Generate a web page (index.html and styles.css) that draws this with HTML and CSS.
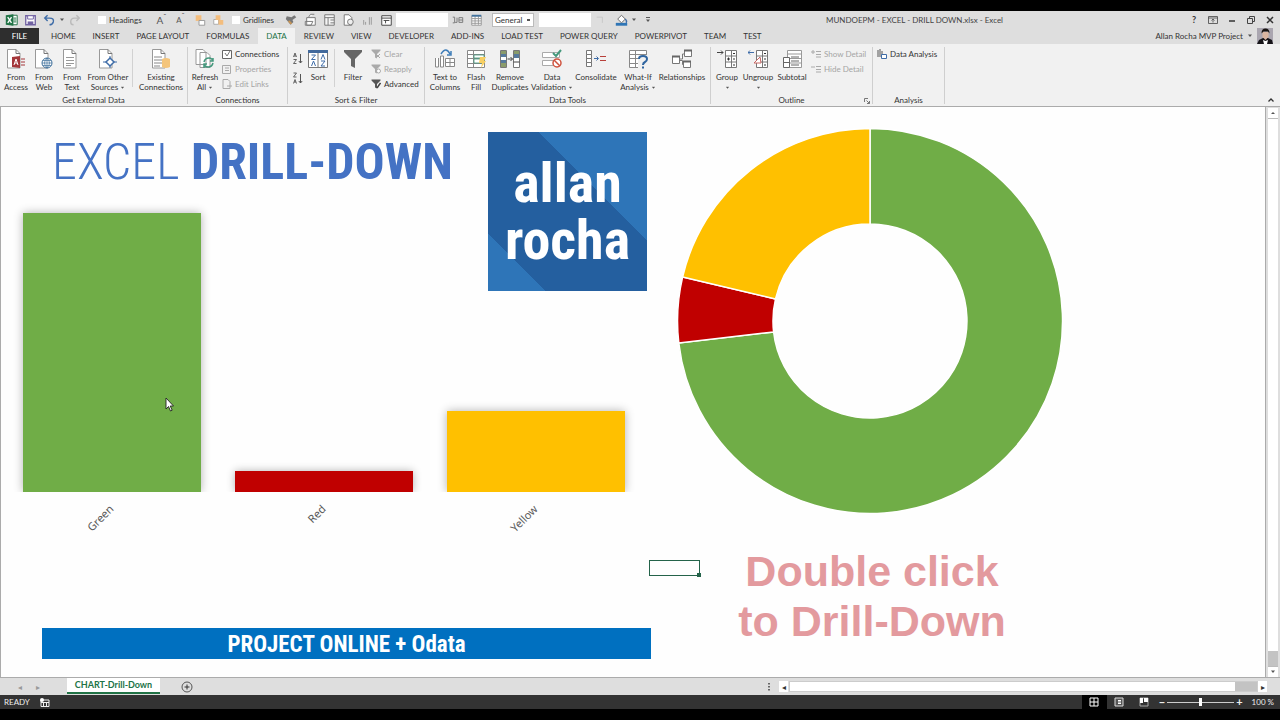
FILE: index.html
```html
<!DOCTYPE html>
<html lang="en">
<head>
<meta charset="utf-8">
<title>MUNDOEPM - EXCEL - DRILL DOWN.xlsx - Excel</title>
<link rel="stylesheet" href="styles.css">
</head>
<body>
<svg class="defs" aria-hidden="true">
  <symbol id="page" viewBox="0 0 20 20"><path d="M1.500 .5h8.500l4 4v14.500h-12.500z" fill="#fff" stroke="#999"/><path d="M10 .5v4h4" fill="none" stroke="#777"/></symbol>
  <symbol id="rows" viewBox="0 0 20 20"><path d="M1.500 1.500h17v17h-17zM1.500 5.500h17M1.500 9.500h17M1.500 14.500h17M7.500 1.500v17" fill="#fff" stroke="#888"/></symbol>
  <symbol id="funnel" viewBox="0 0 20 20"><path d="M1 1h18v2l-7 7v9l-4-2v-7l-7-7z"/></symbol>
  <symbol id="outline" viewBox="0 0 20 20"><path d="M8.500 1.500h11v17h-11zM14.500 1.500v17M8.500 7h11M8.500 13h11" fill="#fff" stroke="#777"/><path d="M16 4.500h2M16 10h2M16 16h2M10 10h3M11.500 8.500v3" stroke="#333"/></symbol>
  <symbol id="caret" viewBox="0 0 6 4"><path d="M1 .5h4l-2 2.500z" fill="#555"/></symbol>
</svg>

<header class="titlebar">
  <div class="qat">
    <svg class="slot" viewBox="0 0 20 16"><path d="M10 3h6v10h-6z" fill="#fff" stroke="#217346"/><path d="M12 6h3M12 8h3M12 10h3" stroke="#217346"/><path d="M4 3l8-1v12l-8-1z" fill="#217346"/><path d="M6 5l4 6M10 5l-4 6" stroke="#fff" stroke-width="1.400"/></svg>
    <svg class="slot" viewBox="0 0 20 16"><path d="M5 3.500h10v9.500h-10z" fill="#fff" stroke="#7162a2" stroke-width="1.400"/><path d="M7 3.500h6v3.500h-6z" fill="#fff" stroke="#7162a2"/><path d="M7 9.500h6v3.500h-6z" fill="#7162a2"/></svg>
    <svg class="slot" viewBox="0 0 20 16"><path d="M8 3l-3 3 3 3M5 6h5q5 0 4 4q-1 3-4 3" fill="none" stroke="#3f6da8" stroke-width="1.500"/></svg>
    <svg class="caret" viewBox="0 0 6 4"><use href="#caret"/></svg>
    <svg class="slot" viewBox="0 0 20 16"><path d="M12 3l3 3-3 3M15 6h-5q-4 0-4 4q0 3 3 3" fill="none" stroke="#bbb" stroke-width="1.500"/></svg>
    <label class="check first"><input type="checkbox">Headings</label>
    <span class="slot letter grow">A<sup>ˆ</sup></span>
    <span class="slot letter">A<sup>ˇ</sup></span>
    <svg class="slot" viewBox="0 0 20 16"><path d="M6 3h6v6h-6z" fill="#f3bd7d"/><path d="M9.500 8.500h6v5h-6z" fill="#fff" stroke="#999"/></svg>
    <svg class="slot" viewBox="0 0 20 16"><path d="M5 7.500h5v5h-5z" fill="#fff" stroke="#aaa"/><path d="M7 3h5v5h-5zM10 8h5v5h-5z" fill="#f3bd7d"/></svg>
    <label class="check second"><input type="checkbox">Gridlines</label>
    <svg class="slot" viewBox="0 0 20 16"><path d="M5 4l5 1 3-2 2 2-4 3 1 2-3 3-5-6z" fill="#777"/><path d="M7 9l3 3" stroke="#c99655" stroke-width="2"/></svg>
    <svg class="slot" viewBox="0 0 20 16"><path d="M6 5.500h9v8h-9zM4.500 9.500h8l-2 4h-6zM8 5l2-3h4" fill="#fff" stroke="#777"/></svg>
    <svg class="slot" viewBox="0 0 20 16"><path d="M5 2.500h10v11h-10zM5 5.500h10M8.500 5.500v8M11 8h4M11 11h4" fill="#f5f5f5" stroke="#777"/></svg>
    <svg class="slot" viewBox="0 0 20 16"><path d="M5.500 2.500h5l3 3v8h-8z" fill="#fff" stroke="#777"/><circle cx="12" cy="10" r="3" fill="#eee" stroke="#777"/></svg>
    <svg class="slot" viewBox="0 0 20 16"><path d="M6 8v5M8 10v3M12 5v8M14 5v8" stroke="#999"/></svg>
    <svg class="slot" viewBox="0 0 20 16"><path d="M5 3.500h10v10h-10zM5 6h10M7 8.500h6M9 8.500v3" fill="#fff" stroke="#444"/></svg>
    <input class="box" type="text" aria-label="Name">
    <svg class="slot" viewBox="0 0 20 16"><path d="M5 5h2v6h-2M9.500 5.500v5h-2M11.500 8h4M11.500 5.500h4v5h-4z" fill="none" stroke="#777"/></svg>
    <svg class="slot" viewBox="0 0 20 16"><path d="M5 3.500h10v10h-10zM5 6.500h10M5 9h10M5 11.500h10M8.500 4v9M12 4v9" fill="#fff" stroke="#999"/><path d="M5 3.500h10" stroke="#41719c" stroke-width="2"/></svg>
    <select class="format" aria-label="Number format"><option>General</option></select>
    <input class="box" type="text" aria-label="Value">
    <svg class="slot" viewBox="0 0 20 16"><path d="M6 5h6v6" stroke="#c7c7c7" fill="none"/></svg>
    <svg class="slot fill" viewBox="0 0 20 16"><path d="M6 7l4-4 4 4-4 4z" fill="#fff" stroke="#666"/><path d="M14 7q2 2 1 4" stroke="#3f6da8" fill="none" stroke-width="1.500"/><path d="M4 11h12v3h-12z" fill="#2f75b5"/></svg>
    <svg class="caret" viewBox="0 0 6 4"><use href="#caret"/></svg>
    <svg class="caret more" viewBox="0 0 6 6"><path d="M1 .5h4" stroke="#555"/><path d="M1 2.500h4l-2 2.500z" fill="#555"/></svg>
  </div>
  <h1 class="doc">MUNDOEPM - EXCEL - DRILL DOWN.xlsx - Excel</h1>
  <div class="window-buttons">
    <button aria-label="Help">?</button>
    <button aria-label="Ribbon options"><svg viewBox="0 0 10 8"><path d="M.5 .5h9v7h-9zM.5 2h9M5 6.500v-3M3.500 4.500l1.500-1.500 1.500 1.500" fill="none" stroke="#444" stroke-width=".8"/></svg></button>
    <button aria-label="Minimize"><svg viewBox="0 0 10 8"><path d="M2 5h6" stroke="#333" stroke-width="1.500"/></svg></button>
    <button aria-label="Restore"><svg viewBox="0 0 10 8"><path d="M1.500 2.500h5v5h-5zM3.500 2v-1.500h5v5h-1.500" fill="none" stroke="#444"/></svg></button>
    <button aria-label="Close"><svg viewBox="0 0 10 8"><path d="M2 1l6 6M8 1l-6 6" stroke="#333" stroke-width="1.500"/></svg></button>
  </div>
</header>

<nav class="tabs">
  <button class="file">FILE</button>
  <button>HOME</button><button>INSERT</button><button>PAGE LAYOUT</button><button>FORMULAS</button><button class="active">DATA</button><button>REVIEW</button><button>VIEW</button><button>DEVELOPER</button><button>ADD-INS</button><button>LOAD TEST</button><button>POWER QUERY</button><button>POWERPIVOT</button><button>TEAM</button><button>TEST</button>
  <div class="user">Allan Rocha MVP Project
    <svg class="caret" viewBox="0 0 6 4"><use href="#caret"/></svg>
    <svg class="avatar" viewBox="0 0 16 16"><path d="M0 0h16v16h-16z" fill="#aaa6b0"/><path d="M0 16l2-4 4-2h5l4 2 1 4z" fill="#161418"/><path d="M5.500 4h6v5l-3 3-3-3z" fill="#d9b5a0"/><path d="M4.500 5.500q0-5 4-5t4 5l-1.500-2h-4.500z" fill="#17120f"/><path d="M6 12l2.500 1 2.500-1-1 4h-3z" fill="#fff"/></svg>
  </div>
</nav>

<section class="ribbon">
  <div class="group g-external">
    <div class="tools">
      <button class="big w28"><svg viewBox="0 0 20 20"><use href="#page"/><path d="M6 8l8-1v12l-8-1z" fill="#a4373a"/><path d="M8 16l2-6 2 6M9 14h2" fill="none" stroke="#fff"/><path d="M15 10h4M15 13h4M15 16h4" stroke="#a4373a"/></svg>From<br>Access</button>
      <button class="big w28"><svg viewBox="0 0 20 20"><use href="#page"/><circle cx="13" cy="14" r="5" fill="#fff" stroke="#41719c"/><path d="M8 14h10M13 9v10M9 11.500h8M9 16.500h8M13 9q-5 5 0 10q5-5 0-10" fill="none" stroke="#41719c" stroke-width=".7"/></svg>From<br>Web</button>
      <button class="big w28"><svg viewBox="0 0 20 20"><use href="#page"/><path d="M4 8.500h8M4 11.500h8M4 14.500h8M4 16.500h5" stroke="#999"/></svg>From<br>Text</button>
      <button class="big w44"><svg viewBox="0 0 20 20"><use href="#page"/><path d="M12 9l4 4-4 4-4-4z" fill="#fff" stroke="#3f6da8" stroke-width="1.500"/><path d="M12 7v2M12 17v2M5 13h3M16 13h3" stroke="#3f6da8"/></svg>From Other<br>Sources <svg class="mini" viewBox="0 0 6 4"><use href="#caret"/></svg></button>
      <span class="rule"></span>
      <button class="big w52"><svg viewBox="0 0 20 20"><use href="#page"/><path d="M3 8h8M3 11h8M3 14h8M3 17h6" stroke="#888"/><path d="M11 10q4-2 8 0v8q-4 2-8 0z" fill="#f4c57c"/></svg>Existing<br>Connections</button>
    </div>
    <h2>Get External Data</h2>
  </div>
  <div class="group g-connections">
    <div class="tools">
      <button class="big w30"><svg viewBox="0 0 20 20"><path d="M1 .5h7l3 3v12h-10zM5 3.500h7l3 3v12h-10z" fill="#fff" stroke="#999"/><path d="M9 13q1-4 5-4 3 0 4 3M18 9v3h-3M18 14q-1 4-5 4-3 0-4-3M9 19v-4h3" fill="none" stroke="#45997d" stroke-width="1.500"/></svg>Refresh<br>All <svg class="mini" viewBox="0 0 6 4"><use href="#caret"/></svg></button>
      <div class="stack">
        <button><svg viewBox="0 0 10 10"><path d="M.5 1.500h9v8h-9z" fill="#fff" stroke="#666"/><path d="M3 4l2 3 3-5" fill="none" stroke="#777"/></svg>Connections</button>
        <button disabled><svg viewBox="0 0 10 10"><path d="M.5 1.500h8v8h-8zM3 4h4M3 6.500h4" fill="none" stroke="#aaa"/></svg>Properties</button>
        <button disabled><svg viewBox="0 0 10 10"><path d="M1 .5h5l2 2v7h-7zM5 7h5" fill="none" stroke="#aaa"/></svg>Edit Links</button>
      </div>
    </div>
    <h2>Connections</h2>
  </div>
  <div class="group g-sort">
    <div class="tools">
      <div class="orders">
        <button aria-label="Sort A to Z"><svg viewBox="0 0 12 12"><path d="M1.500 5l1.500-4 1.500 4M2 4h2M1.500 7.500h3l-3 4h3" fill="none" stroke="#555" stroke-width=".9"/><path d="M8.500 2v9M6.800 9l1.700 2 1.700-2" fill="none" stroke="#555"/></svg></button>
        <button aria-label="Sort Z to A"><svg viewBox="0 0 12 12"><path d="M1.500 1h3l-3 4h3M1.500 11.500l1.500-4 1.500 4M2 10h2" fill="none" stroke="#555" stroke-width=".9"/><path d="M8.500 2v9M6.800 9l1.700 2 1.700-2" fill="none" stroke="#555"/></svg></button>
      </div>
      <button class="big w28"><svg viewBox="0 0 20 20"><path d="M.5 1.500h19v17h-19zM10 2v16" fill="#fff" stroke="#777"/><path d="M0 1h20v3h-20z" fill="#41699c"/><path d="M3.500 6h4l-4 4.500h4M3.500 17l2-5 2 5M13 10.500l2-5 2 5M13 12h4l-4 5h4" fill="none" stroke="#3f6da8"/></svg>Sort</button>
      <span class="rule"></span>
      <button class="big w32"><svg viewBox="0 0 20 20" fill="#666"><use href="#funnel"/></svg>Filter</button>
      <div class="stack">
        <button disabled><svg viewBox="0 0 10 10" fill="#aaa"><use href="#funnel"/><path d="M5 5l4 4M9 5l-4 4" stroke="#aaa"/></svg>Clear</button>
        <button disabled><svg viewBox="0 0 10 10" fill="#aaa"><use href="#funnel"/><circle cx="7.500" cy="7" r="2" fill="#fff" stroke="#aaa"/></svg>Reapply</button>
        <button><svg viewBox="0 0 10 10" fill="#555"><use href="#funnel"/><path d="M6 9l3.500-5" stroke="#444" stroke-width="1.500"/></svg>Advanced</button>
      </div>
    </div>
    <h2>Sort &amp; Filter</h2>
  </div>
  <div class="group g-data">
    <div class="tools">
      <button class="big w36"><svg viewBox="0 0 20 20"><path d="M.5 9v9h3v-9M5.500 7v11h3v-11zM10.500 9.500h9v8h-9zM10.500 13.500h9M15 9.500v8" fill="#fff" stroke="#888"/><path d="M6 5q5-8 9 0M16 2v4h-4" fill="none" stroke="#3f7db8" stroke-width="1.500"/></svg>Text to<br>Columns</button>
      <button class="big w26"><svg viewBox="0 0 20 20"><use href="#rows"/><path d="M8 6h10v3h-10zM8 10h10v4h-10z" fill="#fff" stroke="#45997d" stroke-width=".8"/><path d="M14 8h6l-2 4h2l-5 7 1-5h-3z" fill="#f8cf62"/></svg>Flash<br>Fill</button>
      <button class="big w42"><svg viewBox="0 0 20 20"><path d="M.5 1.500h6v17h-6zM13.500 1.500h6v17h-6z" fill="#fff" stroke="#777"/><path d="M1 2h5v3h-5zM1 14h5v4h-5zM14 2h5v3h-5z" fill="#8a9b6a"/><path d="M1 5h5v3h-5zM1 11h5v3h-5zM14 5h5v4h-5z" fill="#56799c"/><path d="M13.500 13h6M7.500 10h5M10.500 8l2 2-2 2" fill="none" stroke="#444"/></svg>Remove<br>Duplicates</button>
      <button class="big w42"><svg viewBox="0 0 20 20"><path d="M.5 3.500h17v5h-17zM.5 11.500h17v5h-17z" fill="#fff" stroke="#aaa"/><path d="M11 4l3 3 5-6" fill="none" stroke="#45997d" stroke-width="2"/><circle cx="15" cy="14" r="4" fill="#fff" stroke="#cf523e" stroke-width="1.500"/><path d="M12 11l6 6" stroke="#cf523e" stroke-width="1.500"/></svg>Data<br>Validation <svg class="mini" viewBox="0 0 6 4"><use href="#caret"/></svg></button>
      <button class="big w46"><svg viewBox="0 0 20 20"><path d="M.5 1.500h5v4h-5zM.5 5.500h5v4h-5zM.5 9.500h5v4h-5zM.5 13.500h5v4h-5z" fill="#fff" stroke="#777"/><path d="M8 9.500h4M10.500 7.500l2 2-2 2" fill="none" stroke="#3f6da8"/><path d="M14 7.500h6M14 11.500h6" stroke="#b8403a" stroke-width="1.200"/></svg>Consolidate</button>
      <button class="big w38"><svg viewBox="0 0 20 20"><use href="#rows"/><path d="M10 6h10v14h-10z" fill="#f1f1f1"/><path d="M11 10q0-3 4-3 4 0 4 3 0 2-2 3-2 1-2 3M15 17.500v2" fill="none" stroke="#2f65a0" stroke-width="2"/></svg>What-If<br>Analysis <svg class="mini" viewBox="0 0 6 4"><use href="#caret"/></svg></button>
      <button class="big w50"><svg viewBox="0 0 20 20"><path d="M.5 7.500h7v7h-7zM12.500 1.500h7v6h-7zM11.500 12.500h7v6h-7zM7.500 10h3v-5h2M7.500 11.500h3v4h1" fill="#fff" stroke="#777"/><path d="M0 7.500h8M12 1.500h8M11 12.500h8" stroke="#666" stroke-width="2"/></svg>Relationships</button>
    </div>
    <h2>Data Tools</h2>
  </div>
  <div class="group g-outline">
    <div class="tools">
      <button class="big w28"><svg viewBox="0 0 20 20"><use href="#outline"/><path d="M0 3.500h6M4 1.500l2 2-2 2" fill="none" stroke="#444"/></svg>Group<br><svg class="mini" viewBox="0 0 6 4"><use href="#caret"/></svg></button>
      <button class="big w34"><svg viewBox="0 0 20 20"><use href="#outline"/><path d="M0 3.500h6M2 1.500l-2 2 2 2" fill="none" stroke="#3f6da8"/><path d="M6 14h7l-1-6z" fill="#fff" stroke="#c96864"/></svg>Ungroup<br><svg class="mini" viewBox="0 0 6 4"><use href="#caret"/></svg></button>
      <button class="big w34"><svg viewBox="0 0 20 20"><path d="M5.500 1.500h14v17h-14zM5.500 5h14M5.500 9.500h14M5.500 14h14" fill="#fff" stroke="#999"/><path d="M1.500 8.500h6v10h-6zM1.500 13.500h6M9 8h8M9 12h8M9 16h8" fill="#fff" stroke="#666"/></svg>Subtotal</button>
      <div class="stack">
        <button disabled><svg viewBox="0 0 10 10"><path d="M0 3h4M2 1v4M5 2.500h5M5 5.500h5M5 8h5" stroke="#aaa"/></svg>Show Detail</button>
        <button disabled><svg viewBox="0 0 10 10"><path d="M0 3h4M5 2.500h5M5 5.500h5M5 8h5" stroke="#aaa"/></svg>Hide Detail</button>
      </div>
    </div>
    <h2>Outline<svg class="launcher" viewBox="0 0 6 6"><path d="M.5 4v-3.500h3.500M2.500 2.500l3 3M5.500 3v2.500h-2.500" fill="none" stroke="#777"/></svg></h2>
  </div>
  <div class="group g-analysis">
    <div class="tools">
      <div class="stack">
        <button><svg viewBox="0 0 10 10"><path d="M1 1v7M3 0v8M5 2v4" stroke="#555"/><path d="M4.500 5.500h5v4h-5z" fill="#fff" stroke="#3f6da8"/></svg>Data Analysis</button>
      </div>
    </div>
    <h2>Analysis</h2>
  </div>
  <button class="collapse" aria-label="Collapse the ribbon"><svg viewBox="0 0 8 6"><path d="M1.500 4.500l2.500-2.500 2.500 2.500" fill="none" stroke="#333" stroke-width="1.300"/></svg></button>
</section>

<main class="workspace">
  <div class="sheet">
    <section class="left">
      <h2 class="headline"><span>EXCEL</span> <b>DRILL-DOWN</b></h2>
      <div class="logo"><span>allan</span><span>rocha</span></div>
      <div class="bars">
        <div class="bar green"></div><div class="bar red"></div><div class="bar yellow"></div>
      </div>
      <div class="axis"><span>Green</span><span>Red</span><span>Yellow</span></div>
      <div class="banner">PROJECT ONLINE + Odata</div>
    </section>
    <section class="right">
      <svg class="donut" viewBox="-193 -193 386 386" role="img" aria-label="Green, Red and Yellow shares">
        <g stroke="#fff" stroke-width="1.500">
          <path d="M0-192.500A192.500 192.500 0 1 1-191.200 22L-96.400 11A97 97 0 1 0 0-97z" fill="#70ad47"/>
          <path d="M-191.200 22A192.500 192.500 0 0 1-187.400-44L-94.500-22A97 97 0 0 0-96.400 11z" fill="#c00000"/>
          <path d="M-187.400-44A192.500 192.500 0 0 1 0-192.500V-97A97 97 0 0 0-94.500-22z" fill="#ffc000"/>
        </g>
      </svg>
      <p class="hint">Double click<br>to Drill-Down</p>
    </section>
    <div class="cell"></div>
    <svg class="pointer" viewBox="0 0 10 15"><path d="M1 1v11l2.500-2.500 2 4.500 1.700-.8-2-4.200h3.300z" fill="#fff" stroke="#222" stroke-width=".9"/></svg>
  </div>
  <div class="vscroll">
    <button aria-label="Scroll up"><svg viewBox="0 0 6 4"><path d="M1 3h4l-2-2z" fill="#555"/></svg></button>
    <span class="thumb"></span>
    <button aria-label="Scroll down"><svg viewBox="0 0 6 4"><use href="#caret"/></svg></button>
  </div>
</main>

<div class="sheetbar">
  <div class="arrows"><span>◂</span><span>▸</span></div>
  <button class="sheet-tab">CHART-Drill-Down</button>
  <button class="add" aria-label="New sheet"><svg viewBox="0 0 12 12"><circle cx="6" cy="6" r="5" fill="none" stroke="#555"/><path d="M3.500 6h5M6 3.500v5" stroke="#333"/></svg></button>
  <svg class="dots" viewBox="0 0 2 8"><path d="M0 0h2v1.500h-2zM0 3h2v1.500h-2zM0 6h2v1.500h-2z" fill="#666"/></svg>
  <div class="hscroll"><button aria-label="Scroll left">◂</button><span class="track"></span><button aria-label="Scroll right">▸</button></div>
</div>

<footer class="status">
  <span class="ready">READY</span>
  <svg class="macro" viewBox="0 0 10 9"><path d="M1 2h8v6.500h-8z" fill="none" stroke="#eee"/><path d="M1 4.500h8M3.500 4v4M6.500 4v4" stroke="#eee"/><circle cx="2" cy="2" r="2" fill="#fff"/></svg>
  <div class="views">
    <button class="on" aria-label="Normal"><svg viewBox="0 0 10 10"><path d="M1 1h8v8h-8zM1 5h8M5 1v8" fill="none" stroke="#fff"/></svg></button>
    <button aria-label="Page layout"><svg viewBox="0 0 10 10"><path d="M1 1h8v8h-8z" fill="#555" stroke="#ddd"/><path d="M4 3.500h3M4 5h3M4 6.500h3" stroke="#fff"/></svg></button>
    <button aria-label="Page break"><svg viewBox="0 0 10 10"><path d="M1 1h8v8h-8z" fill="none" stroke="#aaa"/><path d="M1 1h3v5h-3zM5 1h4v4h-4z" fill="#fff"/></svg></button>
  </div>
  <label class="zoom">−<input type="range" min="0" max="100" value="50" aria-label="Zoom">+</label>
  <span class="percent">100 %</span>
</footer>
</body>
</html>
```
FILE: styles.css
```css
* { box-sizing: border-box; }

body {
  margin: 0;
  height: 100vh;
  padding: 11px 0;
  display: flex;
  flex-direction: column;
  overflow: hidden;
  background: #000;
  color: #333;
  font: 8px/10px Lato, "Noto Sans", sans-serif;
}

button, input, select {
  font: inherit;
  color: inherit;
  border: 0;
  padding: 0;
  margin: 0;
  background: none;
}

h1, h2, p { margin: 0; font-size: inherit; font-weight: normal; }
.defs { position: absolute; width: 0; height: 0; }

/* Title bar */
.titlebar { display: flex; align-items: center; height: 17px; flex: none; background: #dedede; }
.qat { display: flex; align-items: center; padding-left: 2px; flex: none; }
.slot { width: 19px; height: 16px; flex: none; }
.caret { width: 6px; height: 4px; flex: none; }
.letter { text-align: center; line-height: 16px; color: #555; }
.letter sup { font-size: 8px; line-height: 0; }
.grow { font-size: 10px; }
.check { display: flex; align-items: center; gap: 3px; white-space: nowrap; }
.check input { appearance: none; width: 8px; height: 8px; background: #fff; }
.check.first { width: 54px; margin-left: 14px; }
.check.second { width: 50px; margin-left: 4px; }
.box { width: 52px; height: 14px; background: #fff; }
.format {
  appearance: none;
  width: 42px;
  height: 14px;
  margin: 0 5px 0 6px;
  padding-left: 2px;
  border: 1px solid #bbb;
  background: #fff linear-gradient(#555, #555) no-repeat right 3px center / 3px 2px;
}
.fill { margin-left: 2px; }
.more { height: 6px; margin-left: 8px; }
.doc { margin-left: auto; color: #444; white-space: nowrap; }
.window-buttons { display: flex; gap: 9px; margin-left: 186px; padding-right: 5px; }
.window-buttons button { width: 10px; height: 10px; font-size: 9px; font-weight: bold; }
.window-buttons svg { display: block; width: 10px; height: 8px; margin-top: 1px; }

/* Ribbon tabs */
.tabs { display: flex; height: 16px; flex: none; gap: 1px; background: #dedede; }
.tabs button { padding: 0 8px; white-space: nowrap; }
.tabs .file { width: 39px; margin-right: 3px; background: #2e2e2e; color: #fff; }
.tabs .active { background: #f1f1f1; color: #217346; }
.user { display: flex; align-items: center; gap: 4px; margin-left: auto; padding-right: 7px; white-space: nowrap; }
.avatar { width: 16px; height: 16px; }

/* Ribbon */
.ribbon {
  display: flex;
  height: 63px;
  flex: none;
  padding-top: 3px;
  background: #f1f1f1;
  border-bottom: 1px solid #ababab;
}
.group {
  display: flex;
  flex-direction: column;
  justify-content: space-between;
  flex: none;
  height: 57px;
  border-right: 1px solid #cfcfcf;
}
.group h2 { position: relative; height: 9px; text-align: center; }
.g-external { width: 188px; }
.g-connections { width: 100px; }
.g-sort { width: 137px; }
.g-data { width: 286px; }
.g-outline { width: 162px; }
.g-analysis { width: 72px; }
.tools { display: flex; align-items: flex-start; padding: 2px 0 0 2px; white-space: nowrap; }
.big { flex: none; text-align: center; }
.big > svg:first-child { display: block; width: 20px; height: 20px; margin: 0 auto 3px; }
.big .mini { display: inline-block; width: 5px; height: 4px; vertical-align: middle; }
.w26 { width: 26px; }
.w28 { width: 28px; }
.w30 { width: 30px; }
.w32 { width: 32px; }
.w34 { width: 34px; }
.w36 { width: 36px; }
.w38 { width: 38px; }
.w42 { width: 42px; }
.w44 { width: 44px; }
.w46 { width: 46px; }
.w50 { width: 50px; }
.w52 { width: 52px; }
.rule { width: 1px; height: 38px; margin: 0 2px; background: #d2d2d2; }
.stack { display: flex; flex-direction: column; gap: 5px; margin-left: 2px; }
.stack button { display: flex; align-items: center; gap: 3px; height: 10px; }
.stack svg { width: 10px; height: 10px; }
.stack use { width: 9px; height: 9px; }
.stack button:disabled { color: #a5a5a5; }
.orders { display: flex; flex-direction: column; gap: 8px; width: 14px; padding: 3px 0 0 2px; }
.orders button { width: 12px; height: 12px; }
.orders svg { display: block; width: 12px; height: 12px; }
.launcher { position: absolute; right: 2px; top: 3px; width: 6px; height: 6px; }
.collapse { margin: auto 5px 2px auto; width: 8px; height: 8px; }
.collapse svg { display: block; width: 8px; height: 6px; }

/* Worksheet */
.workspace { display: flex; flex: 1; min-height: 0; background: #dedede; }
.sheet {
  position: relative;
  display: grid;
  grid-template-columns: 650fr 614fr;
  flex: 1;
  background: #fefefe;
  border-left: 1px solid #ababab;
  border-right: 1px solid #ababab;
}
.left { position: relative; display: flex; flex-direction: column; padding-bottom: 18px; }
.headline {
  height: 95px;
  padding: 27px 0 0 51px;
  color: #4472c4;
  font: 50px/56px "Roboto Condensed", "Liberation Sans Narrow", sans-serif;
  white-space: nowrap;
}
.headline span { font-weight: 300; }
.logo {
  position: absolute;
  top: 25px;
  right: 4px;
  width: 159px;
  height: 159px;
  display: flex;
  flex-direction: column;
  justify-content: center;
  background: linear-gradient(45deg, #2e75b8 18%, #245f9f 18%, #245f9f 66%, #2e75b8 66%);
  color: #fff;
  font: bold 56px/57px "Roboto Condensed", "Liberation Sans Narrow", sans-serif;
  text-align: center;
}
.bars {
  display: grid;
  grid-template-columns: repeat(3, 1fr);
  align-items: end;
  gap: 34px;
  height: 290px;
  padding: 0 26px 0 22px;
  overflow: hidden;
}
.bar { box-shadow: 0 0 9px rgba(0, 0, 0, .3); }
.green { height: 279px; background: #70ad47; }
.red { height: 21px; background: #c00000; }
.yellow { height: 81px; background: #ffc000; }
.axis {
  display: grid;
  grid-template-columns: repeat(3, 1fr);
  gap: 34px;
  height: 50px;
  padding: 10px 26px 0 22px;
  color: #595959;
  font: 11px/14px "Noto Sans", sans-serif;
}
.axis span { justify-self: end; margin-right: 53%; width: max-content; height: 14px; transform: rotate(-45deg); transform-origin: top right; }
.banner {
  margin: auto 0 0 41px;
  height: 31px;
  background: #0070c0;
  color: #fff;
  font: bold 23px/33px "Roboto Condensed", "Liberation Sans Narrow", sans-serif;
  text-align: center;
}
.right { display: flex; flex-direction: column; align-items: flex-start; padding: 21px 0 0 26px; }
.donut { width: 386px; height: 386px; }
.hint {
  width: 386px;
  margin-top: 32px;
  padding-left: 4px;
  color: #e39a9e;
  font: bold 43px/50px "Liberation Sans", Arial, sans-serif;
  text-align: center;
}
.cell { position: absolute; left: 648px; top: 453px; width: 51px; height: 16px; border: 1px solid #24634a; }
.cell::after { content: ""; position: absolute; right: -2px; bottom: -2px; width: 4px; height: 4px; background: #24634a; }
.pointer { position: absolute; left: 164px; top: 290px; width: 10px; height: 15px; }

.vscroll { display: flex; flex-direction: column; width: 14px; padding: 1px 2px 0 2px; }
.vscroll button { height: 10px; background: #fff; }
.vscroll svg { display: block; width: 6px; height: 4px; margin: auto; }
.vscroll .thumb { flex: 1; background: linear-gradient(#fff, #fff) no-repeat top / 100% calc(100% - 15px) #c3c3c3; border: solid #bbb; border-width: 1px 0; }

/* Sheet tabs */
.sheetbar { display: flex; align-items: center; height: 18px; flex: none; background: #dedede; border-top: 1px solid #ababab; }
.arrows { display: flex; gap: 14px; width: 67px; padding-left: 18px; color: #999; }
.sheet-tab { align-self: flex-start; height: 16px; width: 93px; background: #fff; color: #217346; border-bottom: 2px solid #217346; font-size: 9px; font-weight: bold; white-space: nowrap; }
.add { width: 12px; height: 12px; margin-left: 21px; }
.add svg { display: block; }
.dots { width: 2px; height: 8px; margin-left: auto; }
.hscroll { display: flex; width: 488px; height: 11px; margin: 0 13px 0 9px; }
.hscroll button { width: 9px; background: #fff; }
.hscroll .track { flex: 1; margin-left: 1px; background: linear-gradient(#fff, #fff) no-repeat left / calc(100% - 22px) 100% #c3c3c3; border: 1px solid #ccc; }

/* Status bar */
.status { display: flex; align-items: center; height: 14px; flex: none; background: #333; color: #eee; }
.ready { padding-left: 4px; }
.macro { width: 10px; height: 9px; margin-left: 10px; }
.views { display: flex; margin-left: auto; }
.views button { width: 25px; height: 14px; }
.views .on { background: #000; }
.views svg { display: block; width: 10px; height: 10px; margin: auto; }
.zoom { display: flex; align-items: center; gap: 2px; margin: 0 9px 0 2px; font-size: 11px; font-weight: bold; }
.zoom input { appearance: none; width: 67px; height: 10px; background: linear-gradient(#ccc, #ccc) no-repeat center / 100% 1px; }
.zoom input::-webkit-slider-thumb { appearance: none; width: 3px; height: 8px; background: #fff; }
.percent { padding-right: 6px; }
```
